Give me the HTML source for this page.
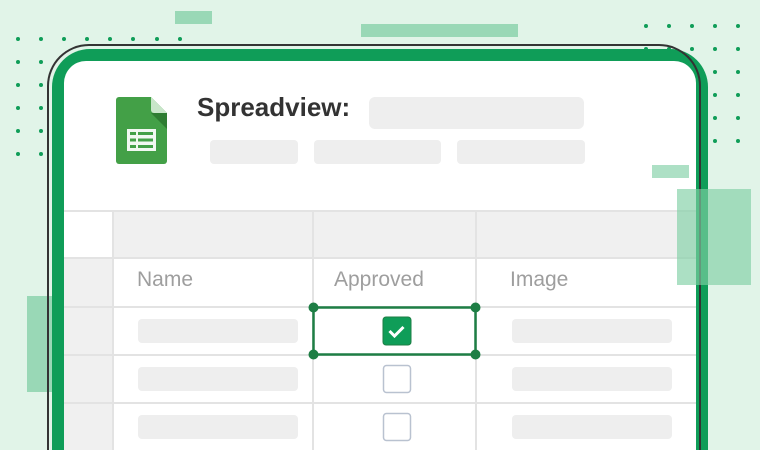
<!DOCTYPE html>
<html><head><style>
*{margin:0;padding:0;box-sizing:border-box}
html,body{width:760px;height:450px;overflow:hidden}
body{background:#e1f4e8;position:relative;font-family:"Liberation Sans",sans-serif}
.a{position:absolute}
.r{background:#99d8b6}
.bar{position:absolute;background:#eeeeee;border-radius:4px}
.h{position:absolute;font-size:21px;color:#9e9e9e;top:268px}
</style></head><body>
<svg class="a" style="left:0;top:0" width="760" height="450">
<g fill="#0f9d58">
<circle cx="18" cy="39" r="2"/><circle cx="41" cy="39" r="2"/><circle cx="64" cy="39" r="2"/><circle cx="87" cy="39" r="2"/><circle cx="110" cy="39" r="2"/><circle cx="133" cy="39" r="2"/><circle cx="157" cy="39" r="2"/><circle cx="180" cy="39" r="2"/>
<circle cx="18" cy="62" r="2"/><circle cx="41" cy="62" r="2"/><circle cx="18" cy="85" r="2"/><circle cx="41" cy="85" r="2"/><circle cx="18" cy="108" r="2"/><circle cx="41" cy="108" r="2"/><circle cx="18" cy="131" r="2"/><circle cx="41" cy="131" r="2"/><circle cx="18" cy="154" r="2"/><circle cx="41" cy="154" r="2"/>
<circle cx="646" cy="26" r="2"/><circle cx="669" cy="26" r="2"/><circle cx="692" cy="26" r="2"/><circle cx="715" cy="26" r="2"/><circle cx="738" cy="26" r="2"/>
<circle cx="646" cy="49" r="2"/><circle cx="669" cy="49" r="2"/><circle cx="692" cy="49" r="2"/><circle cx="715" cy="49" r="2"/><circle cx="738" cy="49" r="2"/>
<circle cx="715" cy="72" r="2"/><circle cx="738" cy="72" r="2"/><circle cx="715" cy="95" r="2"/><circle cx="738" cy="95" r="2"/><circle cx="715" cy="118" r="2"/><circle cx="738" cy="118" r="2"/><circle cx="715" cy="141" r="2"/><circle cx="738" cy="141" r="2"/>
</g></svg>
<div class="a r" style="left:175px;top:11px;width:37px;height:13px"></div>
<div class="a r" style="left:361px;top:24px;width:157px;height:13px"></div>
<div class="a r" style="left:27px;top:296px;width:25px;height:96px"></div>
<div class="a" style="left:52px;top:49px;width:656px;height:401px;background:#0f9d58;border-radius:38px 38px 0 0"></div>
<div class="a" style="left:47px;top:44px;width:654px;height:406px;border:2px solid #333;border-bottom:none;border-radius:42px 42px 0 0"></div>
<div class="a" style="left:64px;top:61px;width:632px;height:389px;background:#fff;border-radius:22px 22px 0 0;overflow:hidden">
 <div class="a" style="left:0;top:150px;width:632px;height:47px;background:#f0f0f0"></div>
 <div class="a" style="left:0;top:150px;width:49px;height:47px;background:#fff"></div>
 <div class="a" style="left:0;top:197px;width:49px;height:250px;background:#f0f0f0"></div>
 <svg class="a" style="left:0;top:0" width="632" height="400"><g stroke="#e3e3e3" stroke-width="2">
 <line x1="0" y1="150" x2="632" y2="150"/><line x1="0" y1="197" x2="632" y2="197"/><line x1="0" y1="246" x2="632" y2="246"/><line x1="0" y1="294" x2="632" y2="294"/><line x1="0" y1="342" x2="632" y2="342"/>
 <line x1="49" y1="150" x2="49" y2="400"/><line x1="249" y1="150" x2="249" y2="400"/><line x1="412" y1="150" x2="412" y2="400"/></g></svg>
</div>
<div class="a" style="left:652px;top:165px;width:37px;height:13px;background:#99d8b6;opacity:.8"></div>
<div class="a" style="left:677px;top:189px;width:74px;height:96px;background:#7fcfa4;opacity:.65"></div>
<svg class="a" style="left:116px;top:97px" width="51" height="67" viewBox="0 0 51 67">
<path d="M3 0H35L51 16V64a3 3 0 0 1-3 3H3a3 3 0 0 1-3-3V3a3 3 0 0 1 3-3z" fill="#43a047"/>
<path d="M35 0L51 16H38a3 3 0 0 1-3-3z" fill="#c8e6c9"/>
<path d="M35 16L51 32V16z" fill="#2e7d32"/>
<rect x="11" y="32" width="29" height="22" fill="#f1f8f1"/>
<g fill="#43a047"><rect x="14" y="35" width="6" height="3"/><rect x="22" y="35" width="15" height="3"/><rect x="14" y="41.5" width="6" height="3"/><rect x="22" y="41.5" width="15" height="3"/><rect x="14" y="48" width="6" height="3"/><rect x="22" y="48" width="15" height="3"/></g>
</svg>
<div class="a" style="left:197px;top:92px;font-size:26px;font-weight:bold;color:#333">Spreadview:</div>
<div class="bar" style="left:369px;top:97px;width:215px;height:32px;border-radius:6px"></div>
<div class="bar" style="left:210px;top:140px;width:88px;height:24px"></div>
<div class="bar" style="left:314px;top:140px;width:127px;height:24px"></div>
<div class="bar" style="left:457px;top:140px;width:128px;height:24px"></div>
<div class="h" style="left:137px">Name</div>
<div class="h" style="left:334px">Approved</div>
<div class="h" style="left:510px">Image</div>
<div class="bar" style="left:138px;top:319px;width:160px;height:24px"></div>
<div class="bar" style="left:138px;top:367px;width:160px;height:24px"></div>
<div class="bar" style="left:138px;top:415px;width:160px;height:24px"></div>
<div class="bar" style="left:512px;top:319px;width:160px;height:24px"></div>
<div class="bar" style="left:512px;top:367px;width:160px;height:24px"></div>
<div class="bar" style="left:512px;top:415px;width:160px;height:24px"></div>
<svg class="a" style="left:0;top:0" width="760" height="450">
<rect x="313.5" y="307.5" width="162" height="47" fill="none" stroke="#1e7e45" stroke-width="2.5"/>
<g fill="#1e7e45"><circle cx="313.5" cy="307.5" r="5"/><circle cx="475.5" cy="307.5" r="5"/><circle cx="313.5" cy="354.5" r="5"/><circle cx="475.5" cy="354.5" r="5"/></g>
<rect x="383" y="317" width="28" height="28" rx="3" fill="#0f9d58" stroke="#1e7e45"/>
<path d="M389.5 331l5 5 9-9" fill="none" stroke="#fff" stroke-width="3"/>
<rect x="383.5" y="365.5" width="27" height="27" rx="3" fill="#fff" stroke="#b9c2d0" stroke-width="1.5"/>
<rect x="383.5" y="413.5" width="27" height="27" rx="3" fill="#fff" stroke="#b9c2d0" stroke-width="1.5"/>
</svg>
</body></html>
